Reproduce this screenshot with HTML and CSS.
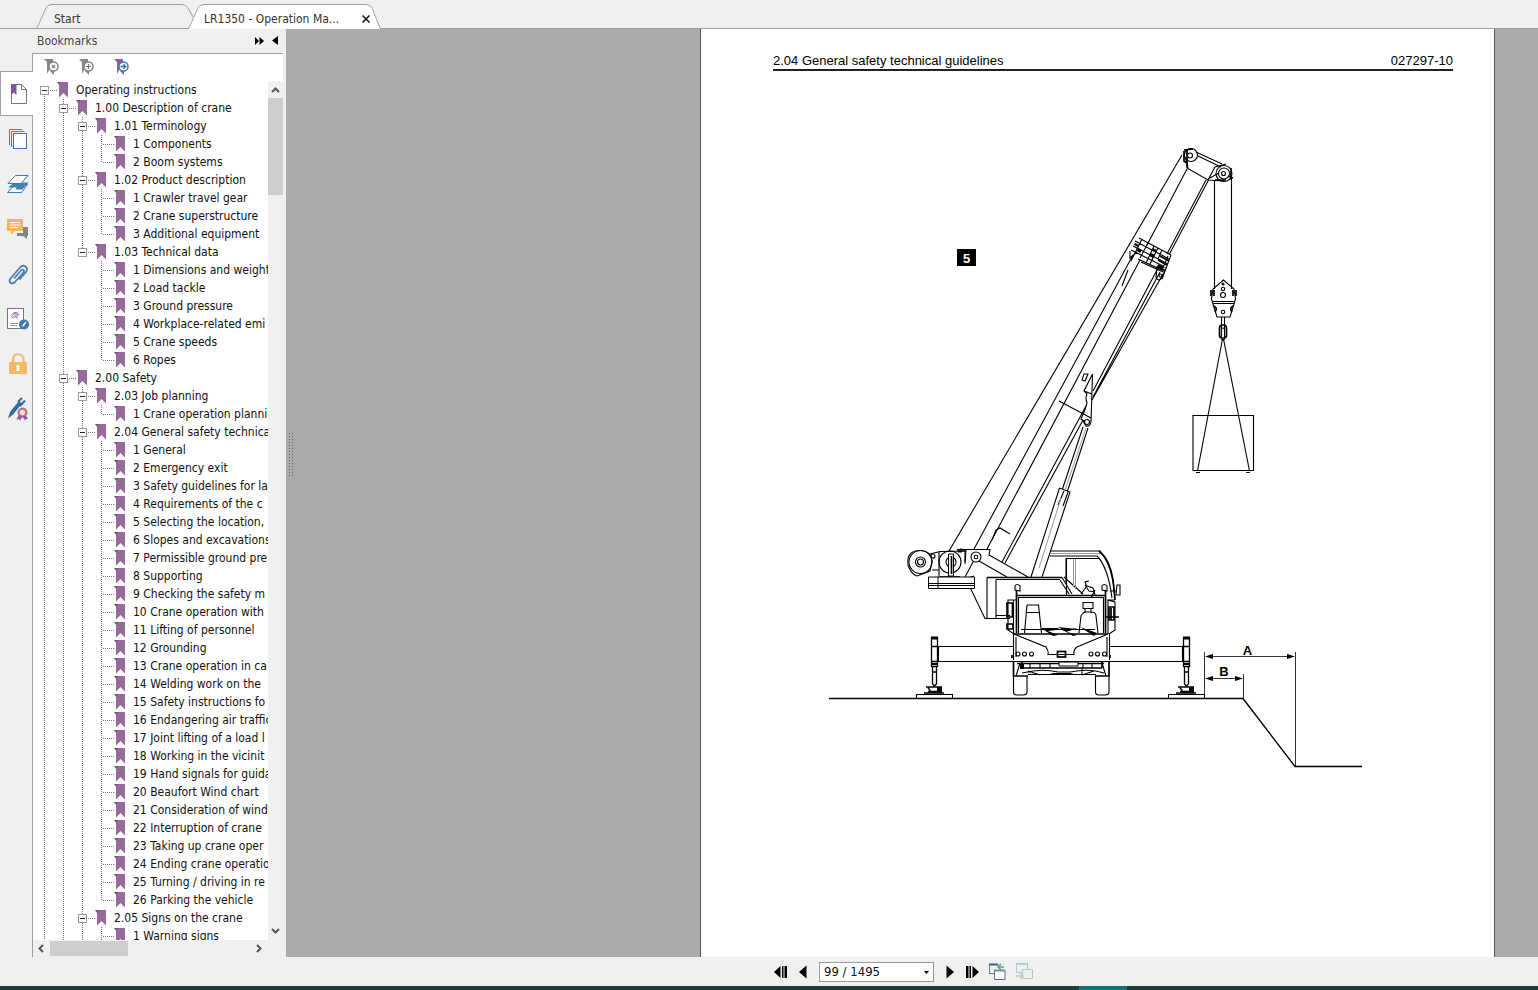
FILE: index.html
```html
<!DOCTYPE html>
<html lang="en">
<head>
    <meta charset="UTF-8">
    <meta name="viewport" content="width=device-width, initial-scale=1.0">
    <title>LR1350 - Operation Manual</title>
    <link rel="stylesheet" href="styles.css">
</head>
<body>
    <!-- shared symbols -->
    <svg class="defs" aria-hidden="true">
        <symbol id="bm" viewBox="0 0 12 16">
            <path d="M0 0h11v15.500l-4.500-4.500L2 15.500V3z" fill="#976a9c"/>
            <path d="M0 0h4v1.500H1.500z" fill="#7d4f88"/>
        </symbol>
        <symbol id="jack" viewBox="0 0 40 66">
            <path d="M15.500 4v30M21.500 4v30M15.500 13.500h6M15.500 28.500h6M15.500 33.500h6M16 39h5M16.500 34v17l2 2 2-2V34" fill="none" stroke="#000" stroke-width="1.300"/>
            <path d="M15 3.500h7v3h-7zM15.500 30h5.500v2h-5.500z" fill="#000"/>
            <path d="M10 54h16M12 55l2 2M14 57v3M22 55v4M12 58.500h14M8 60h20" stroke="#000" stroke-width="1.500" fill="none"/>
            <path d="M21 54h5v4h-5z" fill="#000"/>
        </symbol>
    </svg>

    <nav class="tabs">
        <button class="tab tab-start" type="button">
            <svg viewBox="0 0 160 25"><path d="M.5 25L10 4Q12 .5 15 .5H146Q150 .5 152 4L157 13"/></svg>
            <span>Start</span>
        </button>
        <button class="tab tab-doc" type="button">
            <svg viewBox="0 0 194 25"><path class="fill" d="M.5 25L10 4Q12 .5 15 .5H178Q182 .5 184 4L192.500 25"/></svg>
            <span>LR1350 - Operation Ma...</span>
            <svg class="close" viewBox="0 0 8 8"><path d="M.5.5l7 7M7.500.5l-7 7"/></svg>
        </button>
    </nav>

    <main class="workspace">
        <aside class="rail">
            <button class="rail-item active" type="button" aria-label="Bookmarks">
                <svg viewBox="0 0 22 24"><path d="M3.500 2.500h10l5 5v14h-15z" fill="#fff" stroke="#777"/><path d="M13.500 2.500v5h5" fill="none" stroke="#777"/><path d="M3 2h5.500v11l-2.700-2.500L3 13z" fill="#7c549c"/></svg>
            </button>
            <button class="rail-item" type="button" aria-label="Pages">
                <svg viewBox="0 0 22 24"><path d="M2.500 18V2.500h13M4.500 20V4.500h13" fill="none" stroke="#4a80b5"/><rect x="6.500" y="6.500" width="13" height="15" fill="#fff" stroke="#3d76b0"/></svg>
            </button>
            <button class="rail-item" type="button" aria-label="Layers">
                <svg viewBox="0 0 22 24"><path d="M7.500 12.500h13l-6 8h-14z" fill="#fff" stroke="#3d76b0"/><path d="M1 15.500l6-5h14.500l-6 7H8.500l1-2z" fill="#3d82b8"/><path d="M8.500 3.500h12.500l-7 8H1z" fill="#fff" stroke="#3d76b0"/></svg>
            </button>
            <button class="rail-item" type="button" aria-label="Comments">
                <svg viewBox="0 0 22 24"><path d="M12 10h9v9h-1v3l-4-3h-6v-3h6v-4h-4z" fill="#858585"/><path d="M0 2h16v12H8l-4 4v-4H0z" fill="#f2b560"/><path d="M3 5.500h10M3 8h10M3 10.500h8" stroke="#fff"/></svg>
            </button>
            <button class="rail-item" type="button" aria-label="Attachments">
                <svg viewBox="0 0 22 24"><path d="M8 15.500l7-8c1.500-2 4 0 2.500 2l-8.500 9.500c-3 3-7 0-4.500-3.500l9.500-11c3.500-4 9 0 6 4.500l-6.500 7.500" transform="translate(-1 1)" fill="none" stroke="#4b80ae" stroke-width="1.800"/></svg>
            </button>
            <button class="rail-item" type="button" aria-label="Signatures">
                <svg viewBox="0 0 22 24"><rect x="0.500" y="1.500" width="16" height="20" fill="#fff" stroke="#777"/><path d="M4.500 11c3 0 3-4 5-3.500 2 .5-1 2.500 1 4M5 8c2-4 7-3 7 .5M4.500 9.500c3-5 5-3 6-1.500M7.500 11c1-2 2-2 2-.5" fill="none" stroke="#9664a5"/><path d="M3 16.500h8M3 18.500h7" stroke="#999"/><circle cx="17" cy="17.500" r="5" fill="#3b78ad"/><path d="M15 20l1-3 3-2.500.5.5-2.500 4z" fill="#fff"/></svg>
            </button>
            <button class="rail-item" type="button" aria-label="Security">
                <svg viewBox="0 0 22 24"><path d="M6 11V7.500C6 .5 16.500.5 16.500 7.500V11" fill="none" stroke="#f0bc70" stroke-width="2.200"/><rect x="2" y="10" width="18" height="12" rx="1" fill="#f2b969"/><circle cx="11" cy="14.500" r="1.700" fill="#fff"/><path d="M10 15h2l.5 4h-3z" fill="#fff"/></svg>
            </button>
            <button class="rail-item" type="button" aria-label="Digital IDs">
                <svg viewBox="0 0 22 24"><path d="M3 15l9-11 3 2.500L6 17.500l-5 4z" fill="#2d69a3"/><path d="M11 5l4-4M13 9l5-5.500" stroke="#2d69a3" stroke-width="2"/><path d="M12 17.500l-2.500 5 2.500-.5 1 1.500 2.500-4 2.500 4 1-1.500h2l-3-5z" fill="#8a5b98"/><circle cx="15.500" cy="15.500" r="3.500" fill="#f6dfd2" stroke="#d97461" stroke-width="1.500"/><circle cx="15.500" cy="15.500" r="4.500" fill="none" stroke="#8a5b98"/></svg>
            </button>
        </aside>

        <section class="panel">
            <header class="panel-head">
                <h2>Bookmarks</h2>
                <button type="button" aria-label="Expand panel"><svg width="9" height="8" viewBox="0 0 9 8"><path d="M0 0l4 4-4 4zM4.500 0l4.500 4-4.500 4z"/></svg></button>
                <button type="button" aria-label="Collapse panel"><svg width="6" height="10" viewBox="0 0 6 10"><path d="M6 0v9L0 4.500z"/></svg></button>
            </header>
            <div class="panel-body">
                <div class="tools">
                    <button type="button" aria-label="Delete bookmark"><svg viewBox="0 0 16 18"><path d="M1 0h9v4l-3 5-3 6V3z" fill="#858585"/><path d="M7 12h4v4z" fill="#858585"/><circle cx="10.500" cy="7.500" r="4.500" fill="#fff" stroke="#858585" stroke-width="1.500"/><path d="M8.800 5.800l3.400 3.400m0-3.400l-3.400 3.400" stroke="#777" stroke-width="1.200"/></svg></button>
                    <button type="button" aria-label="Add bookmark"><svg viewBox="0 0 16 18"><path d="M1 0h9v4l-3 5-3 6V3z" fill="#858585"/><path d="M7 12h4v4z" fill="#858585"/><circle cx="10.500" cy="7.500" r="4.500" fill="#fff" stroke="#858585" stroke-width="1.500"/><path d="M8 7.500h5M10.500 5v5" stroke="#777" stroke-width="1.200"/></svg></button>
                    <button type="button" aria-label="Go to bookmark"><svg viewBox="0 0 16 18"><path d="M1 0h9v4l-3 5-3 6V3z" fill="#8d5b9a"/><path d="M7 12h4v4z" fill="#8d5b9a"/><circle cx="10.500" cy="7.500" r="4.500" fill="#fff" stroke="#3e7bb1" stroke-width="1.500"/><path d="M7.500 7.500h5M10.500 5.300l2.300 2.200-2.300 2.200" fill="none" stroke="#2d6da5" stroke-width="1.300"/></svg></button>
                </div>
                <div class="tree-wrap">
                    <ul class="tree">
                        <li class="more">
                            <div class="row"><button type="button" aria-label="Collapse"></button><i></i><svg><use href="#bm"/></svg><a href="#p">Operating instructions</a></div>
                            <ul>
                                <li>
                                    <div class="row"><button type="button" aria-label="Collapse"></button><i></i><svg><use href="#bm"/></svg><a href="#p">1.00 Description of crane</a></div>
                                    <ul>
                                        <li>
                                            <div class="row"><button type="button" aria-label="Collapse"></button><i></i><svg><use href="#bm"/></svg><a href="#p">1.01 Terminology</a></div>
                                            <ul>
                                                <li><div class="row leaf"><i></i><svg><use href="#bm"/></svg><a href="#p">1 Components</a></div></li>
                                                <li><div class="row leaf"><i></i><svg><use href="#bm"/></svg><a href="#p">2 Boom systems</a></div></li>
                                            </ul>
                                        </li>
                                        <li>
                                            <div class="row"><button type="button" aria-label="Collapse"></button><i></i><svg><use href="#bm"/></svg><a href="#p">1.02 Product description</a></div>
                                            <ul>
                                                <li><div class="row leaf"><i></i><svg><use href="#bm"/></svg><a href="#p">1 Crawler travel gear</a></div></li>
                                                <li><div class="row leaf"><i></i><svg><use href="#bm"/></svg><a href="#p">2 Crane superstructure</a></div></li>
                                                <li><div class="row leaf"><i></i><svg><use href="#bm"/></svg><a href="#p">3 Additional equipment</a></div></li>
                                            </ul>
                                        </li>
                                        <li>
                                            <div class="row"><button type="button" aria-label="Collapse"></button><i></i><svg><use href="#bm"/></svg><a href="#p">1.03 Technical data</a></div>
                                            <ul>
                                                <li><div class="row leaf"><i></i><svg><use href="#bm"/></svg><a href="#p">1 Dimensions and weight</a></div></li>
                                                <li><div class="row leaf"><i></i><svg><use href="#bm"/></svg><a href="#p">2 Load tackle</a></div></li>
                                                <li><div class="row leaf"><i></i><svg><use href="#bm"/></svg><a href="#p">3 Ground pressure</a></div></li>
                                                <li><div class="row leaf"><i></i><svg><use href="#bm"/></svg><a href="#p">4 Workplace-related emi</a></div></li>
                                                <li><div class="row leaf"><i></i><svg><use href="#bm"/></svg><a href="#p">5 Crane speeds</a></div></li>
                                                <li><div class="row leaf"><i></i><svg><use href="#bm"/></svg><a href="#p">6 Ropes</a></div></li>
                                            </ul>
                                        </li>
                                    </ul>
                                </li>
                                <li class="more">
                                    <div class="row"><button type="button" aria-label="Collapse"></button><i></i><svg><use href="#bm"/></svg><a href="#p">2.00 Safety</a></div>
                                    <ul>
                                        <li>
                                            <div class="row"><button type="button" aria-label="Collapse"></button><i></i><svg><use href="#bm"/></svg><a href="#p">2.03 Job planning</a></div>
                                            <ul>
                                                <li><div class="row leaf"><i></i><svg><use href="#bm"/></svg><a href="#p">1 Crane operation planni</a></div></li>
                                            </ul>
                                        </li>
                                        <li>
                                            <div class="row"><button type="button" aria-label="Collapse"></button><i></i><svg><use href="#bm"/></svg><a href="#p">2.04 General safety technica</a></div>
                                            <ul>
                                                <li><div class="row leaf"><i></i><svg><use href="#bm"/></svg><a href="#p">1 General</a></div></li>
                                                <li><div class="row leaf"><i></i><svg><use href="#bm"/></svg><a href="#p">2 Emergency exit</a></div></li>
                                                <li><div class="row leaf"><i></i><svg><use href="#bm"/></svg><a href="#p">3 Safety guidelines for la</a></div></li>
                                                <li><div class="row leaf"><i></i><svg><use href="#bm"/></svg><a href="#p">4 Requirements of the c</a></div></li>
                                                <li><div class="row leaf"><i></i><svg><use href="#bm"/></svg><a href="#p">5 Selecting the location,</a></div></li>
                                                <li><div class="row leaf"><i></i><svg><use href="#bm"/></svg><a href="#p">6 Slopes and excavations</a></div></li>
                                                <li><div class="row leaf"><i></i><svg><use href="#bm"/></svg><a href="#p">7 Permissible ground pre</a></div></li>
                                                <li><div class="row leaf"><i></i><svg><use href="#bm"/></svg><a href="#p">8 Supporting</a></div></li>
                                                <li><div class="row leaf"><i></i><svg><use href="#bm"/></svg><a href="#p">9 Checking the safety m</a></div></li>
                                                <li><div class="row leaf"><i></i><svg><use href="#bm"/></svg><a href="#p">10 Crane operation with</a></div></li>
                                                <li><div class="row leaf"><i></i><svg><use href="#bm"/></svg><a href="#p">11 Lifting of personnel</a></div></li>
                                                <li><div class="row leaf"><i></i><svg><use href="#bm"/></svg><a href="#p">12 Grounding</a></div></li>
                                                <li><div class="row leaf"><i></i><svg><use href="#bm"/></svg><a href="#p">13 Crane operation in ca</a></div></li>
                                                <li><div class="row leaf"><i></i><svg><use href="#bm"/></svg><a href="#p">14 Welding work on the</a></div></li>
                                                <li><div class="row leaf"><i></i><svg><use href="#bm"/></svg><a href="#p">15 Safety instructions fo</a></div></li>
                                                <li><div class="row leaf"><i></i><svg><use href="#bm"/></svg><a href="#p">16 Endangering air traffic</a></div></li>
                                                <li><div class="row leaf"><i></i><svg><use href="#bm"/></svg><a href="#p">17 Joint lifting of a load l</a></div></li>
                                                <li><div class="row leaf"><i></i><svg><use href="#bm"/></svg><a href="#p">18 Working in the vicinit</a></div></li>
                                                <li><div class="row leaf"><i></i><svg><use href="#bm"/></svg><a href="#p">19 Hand signals for guida</a></div></li>
                                                <li><div class="row leaf"><i></i><svg><use href="#bm"/></svg><a href="#p">20 Beaufort Wind chart</a></div></li>
                                                <li><div class="row leaf"><i></i><svg><use href="#bm"/></svg><a href="#p">21 Consideration of wind</a></div></li>
                                                <li><div class="row leaf"><i></i><svg><use href="#bm"/></svg><a href="#p">22 Interruption of crane</a></div></li>
                                                <li><div class="row leaf"><i></i><svg><use href="#bm"/></svg><a href="#p">23 Taking up crane oper</a></div></li>
                                                <li><div class="row leaf"><i></i><svg><use href="#bm"/></svg><a href="#p">24 Ending crane operatio</a></div></li>
                                                <li><div class="row leaf"><i></i><svg><use href="#bm"/></svg><a href="#p">25 Turning / driving in re</a></div></li>
                                                <li><div class="row leaf"><i></i><svg><use href="#bm"/></svg><a href="#p">26 Parking the vehicle</a></div></li>
                                            </ul>
                                        </li>
                                        <li class="more">
                                            <div class="row"><button type="button" aria-label="Collapse"></button><i></i><svg><use href="#bm"/></svg><a href="#p">2.05 Signs on the crane</a></div>
                                            <ul>
                                                <li class="more"><div class="row leaf"><i></i><svg><use href="#bm"/></svg><a href="#p">1 Warning signs</a></div></li>
                                            </ul>
                                        </li>
                                    </ul>
                                </li>
                            </ul>
                        </li>
                    </ul>
                    <div class="vscroll">
                        <svg viewBox="0 0 9 6"><path d="M1 5l3.500-3.500L8 5"/></svg>
                        <span class="thumb"></span>
                        <svg viewBox="0 0 9 6"><path d="M1 1l3.500 3.500L8 1"/></svg>
                    </div>
                </div>
                <div class="hscroll">
                    <svg viewBox="0 0 6 9"><path d="M5 1L1.500 4.500 5 8"/></svg>
                    <span class="thumb"></span>
                    <svg viewBox="0 0 6 9"><path d="M1 1l3.500 3.500L1 8"/></svg>
                </div>
            </div>
        </section>

        <section class="viewer">
            <div class="grip"></div>
            <article class="page" id="p">
                <header class="page-head">
                    <span>2.04 General safety technical guidelines</span>
                    <span>027297-10</span>
                </header>
                <svg class="drawing" viewBox="773 120 680 660" role="img" aria-label="Mobile crane next to a slope">
                    <rect x="957" y="249" width="19" height="17" fill="#000"/>
                    <text x="966.500" y="262.500" class="num">5</text>

                    <!-- ground and slope -->
                    <path class="mid" d="M829 698.500H1243L1295 766.500H1362"/>
                    <path class="thin" d="M1204.500 652V698M1243.500 674V698M1295.500 652V766M1206 656.500H1294M1206 678.500H1242"/>
                    <path d="M1205 656.500l8-2.500v5zM1295 656.500l-8-2.500v5zM1205 678.500l8-2.500v5zM1243 678.500l-8-2.500v5z"/>
                    <text x="1247.500" y="655" class="dim">A</text>
                    <text x="1224" y="676" class="dim">B</text>

                    <!-- hoist rope, boom -->
                    <path class="line" d="M1182 155L949 551M1187 169L1147 245M1133 255L974 549M1140 260L987 549"/>
                    <path class="line" d="M1206 180L1167 254M1208.500 180L1169.500 254M1157 270L1093 391M1160 272L1093 397M1163 274L1092 400"/>
                    <path class="line" d="M1086 406L1002 562M1083 420L1005 563M1128 270l-6 16"/>

                    <!-- boom collars -->
                    <path class="line" d="M1139 238l32 17M1135 241l34 18M1133 246l35 18M1131 250l36 18M1138 259l26 12M1141 262l22 10M1171 255l-9 24M1168 256l-6 14M1142 239l-11 22M1148 243l-8 15M1154 246l-8 17M1158 248l-8 16M1162 250l-4 9M1130 251v7l7-6"/>
                    <path d="M1135 243l4 2-1 2-4-2zM1138 248l4 2-2 3-3-2zM1151 253l4 2-2 3-4-2zM1158 264l6 3-2 3-5-3zM1153 248l4 2-1 2-4-1z"/>
                    <path class="heavy" d="M1160 256l9 5M1158 260l9 5"/>
                    <path class="line" d="M1157 267l-1 11q3 4 6 0l3-8z"/>
                    <circle class="line" cx="1160.500" cy="275.500" r="1.500"/>

                    <!-- boom head -->
                    <path class="line" d="M1186 158L1187 168L1208 180L1224 181M1208 180L1215 167L1226 164M1196 152L1222 164M1198 156L1221 167M1187 160l1 9M1208 179L1219 173"/>
                    <circle class="line" cx="1191" cy="155" r="6.500"/>
                    <circle class="line" cx="1190" cy="155.500" r="2.500"/>
                    <path class="heavy" d="M1184 150l9-1M1184 151v10l3 2M1187 150v11"/>
                    <circle class="line" cx="1224" cy="173.500" r="8"/>
                    <circle class="line" cx="1224" cy="173.500" r="5.500"/>
                    <circle class="line" cx="1223.500" cy="173.500" r="2"/>
                    <path class="heavy" d="M1228 176l5 2M1231 168v12M1215 180h11"/>

                    <!-- rope and hook block -->
                    <path class="line" d="M1214.500 181V289M1231.500 178V289M1223.500 280L1213 289L1211.500 299L1213 304L1217 317H1230L1234 304L1235.500 299L1234 289ZM1213 303.500H1234M1213 301.500H1234"/>
                    <path class="heavy" d="M1211 290v6M1214 290v6M1233 290v6M1236 290v6M1214 306q4 2 1 6M1233 306q-4 2-1 6"/>
                    <circle class="line" cx="1223" cy="289" r="1.700"/>
                    <circle class="line" cx="1223" cy="295" r="2.500"/>
                    <circle class="line" cx="1223" cy="312" r="1.700"/>
                    <circle class="line" cx="1223" cy="284" r="1"/>
                    <path class="line" d="M1221.500 317v14M1224.500 317v14"/>
                    <rect class="heavy" x="1219.500" y="325" width="7" height="13" rx="3"/>
                    <rect class="line" x="1221.500" y="328" width="3" height="12" rx="1.500"/>

                    <!-- load -->
                    <path class="line" d="M1222.500 339L1197.500 471M1223.500 339L1249.500 471M1193 415.500h60.500v55H1193zM1196 472.500h4M1246 472.500h4"/>

                    <!-- luffing cylinder -->
                    <path class="line" d="M1082 380l2-6h4l-3 7zM1092.500 374L1084 391L1087 394Q1085 398 1087 403Q1085 411 1081 419L1084 421M1084 391L1092 394M1092.500 374L1091 422Q1090 427 1086 426L1083 421M1059 401L1091 418"/>
                    <circle class="line" cx="1087" cy="422" r="2.500"/>
                    <path class="line" d="M1083 427L1062.500 489M1088 428L1067.500 491M1059.500 488L1070 492L1042 577M1059.500 488L1031 577M1064 491l-6 14M1068 492l-5 14"/>
                    <path class="soft" d="M1086 428L1065 490M1061 498L1039 568"/>

                    <!-- boom foot and winches -->
                    <path class="line" d="M958 549.500H990L989 555L1028 577M979 561L1007 577M996 530l4-2 10 6M992 540l4-10M965 549V562M966 579L985 618.500H1010M974 576L964 579L973 562"/>
                    <circle class="line" cx="976" cy="557" r="5"/>
                    <circle class="line" cx="976" cy="557" r="1.800"/>
                    <path class="line" d="M908 565Q906 550 921 550.500Q931 551 932 561L930 571L917 576Q911 574 908 565zM930 554L940 551.500L966 551M939 552V577M932 570h7M960 549l6 1-1 14M958 552h4"/>
                    <circle class="line" cx="920.500" cy="562" r="11.500"/>
                    <circle class="line" cx="920.500" cy="562" r="5"/>
                    <circle class="line" cx="920.500" cy="562" r="3"/>
                    <circle class="line" cx="950" cy="562" r="11"/>
                    <circle class="line" cx="951" cy="562" r="5"/>
                    <circle class="line" cx="933" cy="556" r="2"/>
                    <path d="M948.500 554h5v22h-5z" fill="#fff" stroke="#000"/>
                    <path class="heavy" d="M951.500 556v18M940 577h20M957 550h7"/>
                    <path d="M928.500 577H974.500V588.500H928.500zM928.500 583.500h46M928.500 585.500h46M938 577v11" fill="#fff" stroke="#000"/>

                    <!-- superstructure and cab -->
                    <path class="line" d="M987 577.500H1062L1072 594M987 577.500V618.500M996 579.500V618M996 579.500H1060M1060 580L1069 594M1064 577L1083 594M996 615.500h14"/>
                    <path class="heavy" d="M987 577.500H1062"/>
                    <path class="line" d="M1050 551H1100Q1113 566 1115 598M1050 556H1097Q1108 567 1112 598M1066.500 595V558.500H1100M1066 558v24"/>
                    <path class="soft" d="M1050 553.500H1100M1073.500 559V587M1075.500 559V589"/>
                    <path class="heavy" d="M1099 551Q1110 560 1113 580L1115 600"/>
                    <path class="line" d="M1081 594l6-8 6 2 2 7M1085 585l4 6 6 1M1087 587l-2-5 4-1M1095 590l-4 8M1117 585h3v10h-4zM1110 591h6"/>

                    <!-- carrier cab -->
                    <path class="heavy" d="M1016.500 595.500H1105.500M1016.500 590V633M1105.500 590V633M1014 634H1108"/>
                    <path class="line" d="M1018.500 597V633M1103.500 597V633M1018 597.500H1104M1108 600v34M1013 600h-5v30l6 4M1108 600l7 2v28l-6 4M1013.500 600v33M1115 600h-8M1010 600h6"/>
                    <path class="heavy" d="M1007 603h5.500v14H1007zM1007 624h6v5h-6zM1109 607h5v13h-5zM1111 608v12M1106 617h13"/>
                    <path class="line" d="M1015 590v-4q2-3 5 0v5zM1102 590v-4q2-3 5 0v5z"/>
                    <path class="line" d="M1027 605H1038.500L1041.500 633M1027 605L1024.500 633M1026 612.500h13"/>
                    <path class="line" d="M1083 602.500h10v6h-10zM1085 609v4M1091 609v4M1079 633L1081 616Q1083 612 1086 612H1091Q1096 612 1096 616L1098 633"/>
                    <path class="line" d="M1021 629.500H1095"/>
                    <path d="M1041 628l18 0-3 2-8 1 10 4-5 1zM1058 627l19 2-4 1-9 1 13 4-4 1zM1080 627l17 6-3 3zM1062 630l16-2-12 4z"/>

                    <!-- carrier body -->
                    <path class="line" d="M1014 634L1046 647Q1049 652 1048 654.500H1074Q1073 650 1077 647L1108 634M1013.500 634V660M1109.500 634V660M1016 637v20M1107 637v20M1012 661.500H1110"/>
                    <rect class="heavy" x="1057.500" y="651.500" width="8" height="5.500"/>
                    <circle class="line" cx="1018" cy="654" r="2"/>
                    <circle class="line" cx="1024.500" cy="654" r="2"/>
                    <circle class="line" cx="1031.500" cy="654" r="2"/>
                    <circle class="line" cx="1091" cy="654" r="2"/>
                    <circle class="line" cx="1097.500" cy="654" r="2"/>
                    <circle class="line" cx="1104.500" cy="654" r="2"/>
                    <path class="heavy" d="M1013.500 661V676H1028M1109 661V676H1095M1017 663.500H1104M1022 668H1102M1022 662v6M1102 662v6M1012 655v3M1110 655v3"/>
                    <path class="line" d="M1016 676l4-13M1106 676l-4-13M1030 663v5M1040 663v5M1050 663v5M1083 663v5M1092 663v5M1022 673q20-5 36-1h12q20-4 34 1M1028 674.500H1096M1028 671l12 4M1082 675l12-4M1082 668v7"/>
                    <path d="M1059 662h19v4h-19z" fill="#fff" stroke="#000"/>
                    <path d="M1050 673h24l-8 2h-10zM1020 664h4v5h-4z"/>
                    <path class="line" d="M1013.500 676V692Q1013.500 695 1017 695H1023Q1027 695 1027 692V676M1095.500 676V692Q1095.500 695 1099 695H1105Q1109 695 1109 692V676"/>

                    <!-- outriggers -->
                    <path class="line" d="M938 646.500H1013M938 661.500H1013M1109 646.500H1184M1109 661.500H1184M938.500 646V662M1182.500 646V662M916.500 698V694.500H952.500V698M1168.500 698V694.500H1204.500V698"/>
                    <use href="#jack" x="916" y="633" width="40" height="66"/>
                    <use href="#jack" x="1168" y="633" width="40" height="66"/>
                </svg>
            </article>
        </section>
    </main>

    <footer class="pager">
        <button type="button" aria-label="First page"><svg width="13" height="14" viewBox="0 0 13 14"><path d="M6.500 1v12L0 7zM8 1h1.500v12H8zM10.500 1H13v12h-2.500z"/></svg></button>
        <button type="button" aria-label="Previous page"><svg width="8" height="14" viewBox="0 0 8 14"><path d="M7.500.5v13L0 7z"/></svg></button>
        <label class="page-select">
            <select aria-label="Page"><option>99 / 1495</option></select>
            <svg width="5" height="3" viewBox="0 0 5 3"><path d="M0 0h5L2.500 3z"/></svg>
        </label>
        <button type="button" aria-label="Next page"><svg width="8" height="14" viewBox="0 0 8 14"><path d="M.5.5v13L8 7z"/></svg></button>
        <button type="button" aria-label="Last page"><svg width="13" height="14" viewBox="0 0 13 14"><path d="M0 1h2.500v12H0zM3.500 1H5v12H3.500zM6.500 1v12L13 7z"/></svg></button>
        <button type="button" aria-label="Previous view"><svg width="17" height="17" viewBox="0 0 17 17"><path d="M.5 11V1.500h9M.5 10.500h5" fill="none" stroke="#6b7f88"/><path d="M0 1.500h9" stroke="#31639a" stroke-width="2"/><path d="M5.500 7.500h10.500v9H5.500z" fill="#fff" stroke="#667"/><path d="M5 7.500h11" stroke="#5f9d92" stroke-width="2"/><path d="M9 4h6M12 1L9 4l3 3" fill="none" stroke="#5f9d92" stroke-width="1.500"/></svg></button>
        <button type="button" aria-label="Next view"><svg width="17" height="17" viewBox="0 0 17 17"><path d="M.5.5h11v9H.5z" fill="none" stroke="#b6c6c9"/><path d="M0 1h12M6 7h10" stroke="#b6c6c9" stroke-width="1.500"/><path d="M6.500 6.500h10v9h-10z" fill="#f0f0f0" stroke="#b6c6c9"/><path d="M0 13h6M4 10.500L7 13l-3 2.500" fill="none" stroke="#b2d0ca" stroke-width="1.500"/></svg></button>
    </footer>
    <div class="taskbar"><span></span></div>
</body>
</html>
```
FILE: styles.css
```css
* {
    box-sizing: border-box;
}
body {
    margin: 0;
    height: 100vh;
    display: flex;
    flex-direction: column;
    overflow: hidden;
    background-color: #f0f0f0;
    color: #111;
    font-family: "DejaVu Sans Condensed", "Noto Sans", sans-serif;
    font-size: 12px;
}
button {
    padding: 0;
    border: 0;
    background: none;
    color: inherit;
    font: inherit;
}
svg {
    display: block;
    flex: none;
}
.defs {
    position: absolute;
    width: 0;
    height: 0;
}

/* tabs */
.tabs {
    display: flex;
    align-items: flex-end;
    height: 29px;
    flex: none;
    padding-left: 36px;
    border-bottom: 1px solid #a0a0a0;
}
.tab {
    position: relative;
    display: flex;
    align-items: center;
    height: 25px;
    margin-bottom: -1px;
    padding: 4px 12px 0 18px;
    color: #333;
}
.tab > svg:first-child {
    position: absolute;
    left: 0;
    top: 0;
    width: 100%;
    height: 25px;
    fill: none;
    stroke: #a0a0a0;
}
.tab .fill {
    fill: #fff;
}
.tab span {
    position: relative;
    flex: 1;
    text-align: left;
    white-space: nowrap;
}
.tab-start {
    width: 160px;
}
.tab-doc {
    width: 194px;
    margin-left: -8px;
    padding-left: 16px;
}
.close {
    position: relative;
    width: 8px;
    height: 8px;
    stroke: #111;
    stroke-width: 1.5;
}

.workspace {
    display: flex;
    flex: 1;
    min-height: 0;
}

/* icon rail */
.rail {
    width: 32px;
    flex: none;
    padding-top: 42px;
}
.rail-item {
    position: relative;
    display: flex;
    align-items: center;
    justify-content: center;
    width: 33px;
    height: 45px;
    padding-left: 3px;
}
.rail-item svg {
    width: 22px;
    height: 24px;
}
.rail-item.active {
    background-color: #fff;
    border: 1px solid #a0a0a0;
    border-right: 0;
}

/* bookmarks panel */
.panel {
    display: flex;
    flex-direction: column;
    width: 254px;
    flex: none;
    padding-right: 3px;
}
.panel-head {
    display: flex;
    align-items: center;
    gap: 8px;
    height: 24px;
    padding: 0 5px;
}
.panel-head h2 {
    flex: 1;
    margin: 0;
    color: #444;
    font-size: 12px;
    font-weight: normal;
}
.panel-body {
    display: flex;
    flex-direction: column;
    flex: 1;
    min-height: 0;
    background-color: #fff;
    border: solid #a0a0a0;
    border-width: 1px 0 0 1px;
}
.tools {
    display: flex;
    gap: 19px;
    padding: 5px 10px;
    height: 27px;
}
.tools svg {
    width: 16px;
    height: 18px;
}
.tree-wrap {
    display: flex;
    flex: 1;
    min-height: 0;
}
.tree {
    flex: 1;
    min-width: 0;
    overflow: hidden;
    padding-left: 7px;
}
.tree, .tree ul {
    margin: 0;
    list-style: none;
}
.tree ul {
    padding-left: 19px;
}
.tree li {
    background: repeating-linear-gradient(#777 0 1px, transparent 1px 2px) 4px 0 / 1px 100% no-repeat;
}
.tree li:last-child:not(.more) {
    background-size: 1px 9px;
}
.tree > li {
    background-position: 4px 9px;
}
.row {
    display: flex;
    align-items: center;
    height: 18px;
}
.row button {
    flex: none;
    width: 9px;
    height: 9px;
    border: 1px solid #999;
    background: linear-gradient(#222, #222) center / 5px 1px no-repeat #fff;
}
.row i {
    flex: none;
    width: 8px;
    height: 1px;
    background: repeating-linear-gradient(90deg, transparent 0 1px, #777 1px 2px);
}
.row.leaf i {
    width: 12px;
    margin-left: 5px;
}
.row svg {
    width: 12px;
    height: 16px;
}
.row a {
    margin-left: 7px;
    color: #111;
    text-decoration: none;
    white-space: nowrap;
}
.vscroll {
    display: flex;
    flex-direction: column;
    align-items: center;
    width: 15px;
    flex: none;
    padding: 6px 0;
    background-color: #f0f0f0;
}
.vscroll svg {
    width: 9px;
    height: 6px;
}
.vscroll svg, .hscroll svg {
    fill: none;
    stroke: #555;
    stroke-width: 2;
}
.vscroll .thumb {
    width: 15px;
    height: 97px;
    margin: 5px 0 auto;
    background-color: #cdcdcd;
}
.hscroll {
    display: flex;
    align-items: center;
    height: 17px;
    padding: 0 21px 0 5px;
    background-color: #f0f0f0;
}
.hscroll svg {
    width: 6px;
    height: 9px;
}
.hscroll .thumb {
    width: 78px;
    height: 15px;
    margin: 0 auto 0 6px;
    background-color: #cdcdcd;
}

/* document */
.viewer {
    position: relative;
    display: flex;
    justify-content: flex-end;
    flex: 1;
    min-width: 0;
    padding-right: 43px;
    background-color: #ababab;
}
.grip {
    position: absolute;
    left: 3px;
    top: 404px;
    width: 4px;
    height: 44px;
    background: repeating-linear-gradient(transparent 0 1px, #ababab 1px 3px), repeating-linear-gradient(90deg, #666 0 1px, transparent 1px 3px);
}
.page {
    width: 795px;
    padding: 22px 41px 0 72px;
    background-color: #fff;
    border: solid #555;
    border-width: 0 1px;
    font-family: "Liberation Sans", Arial, sans-serif;
}
.page-head {
    display: flex;
    justify-content: space-between;
    height: 20px;
    border-bottom: 2px solid #222;
    color: #000;
    font-size: 13px;
    line-height: 19px;
}
.drawing {
    width: 100%;
    margin-top: 49px;
}
.line, .mid, .heavy, .thin, .soft {
    fill: none;
    stroke: #000;
    stroke-width: 1.1;
}
.mid {
    stroke-width: 1.4;
}
.heavy {
    stroke-width: 1.7;
}
.thin {
    stroke: #333;
    stroke-width: 1;
}
.soft {
    stroke: #999;
    stroke-width: 1;
}
.num, .dim {
    font-size: 13px;
    font-weight: bold;
    text-anchor: middle;
}
.num {
    fill: #fff;
}

/* page navigation */
.pager {
    display: flex;
    align-items: center;
    justify-content: center;
    gap: 10px;
    height: 29px;
    flex: none;
    padding: 0 17px 0 286px;
}
.pager button {
    display: flex;
    justify-content: center;
    min-width: 12px;
}
.page-select {
    position: relative;
}
.page-select select {
    appearance: none;
    display: block;
    width: 115px;
    height: 20px;
    padding: 0 4px;
    border: 1px solid #999;
    border-radius: 0;
    background-color: #fff;
    color: #111;
    font: inherit;
    font-size: 13px;
}
.page-select svg {
    position: absolute;
    right: 5px;
    top: 9px;
}
.taskbar {
    display: flex;
    height: 4px;
    flex: none;
    background-color: #1d3d3b;
}
.taskbar span {
    width: 48px;
    margin-left: 1079px;
    background-color: #0e7474;
}
```
